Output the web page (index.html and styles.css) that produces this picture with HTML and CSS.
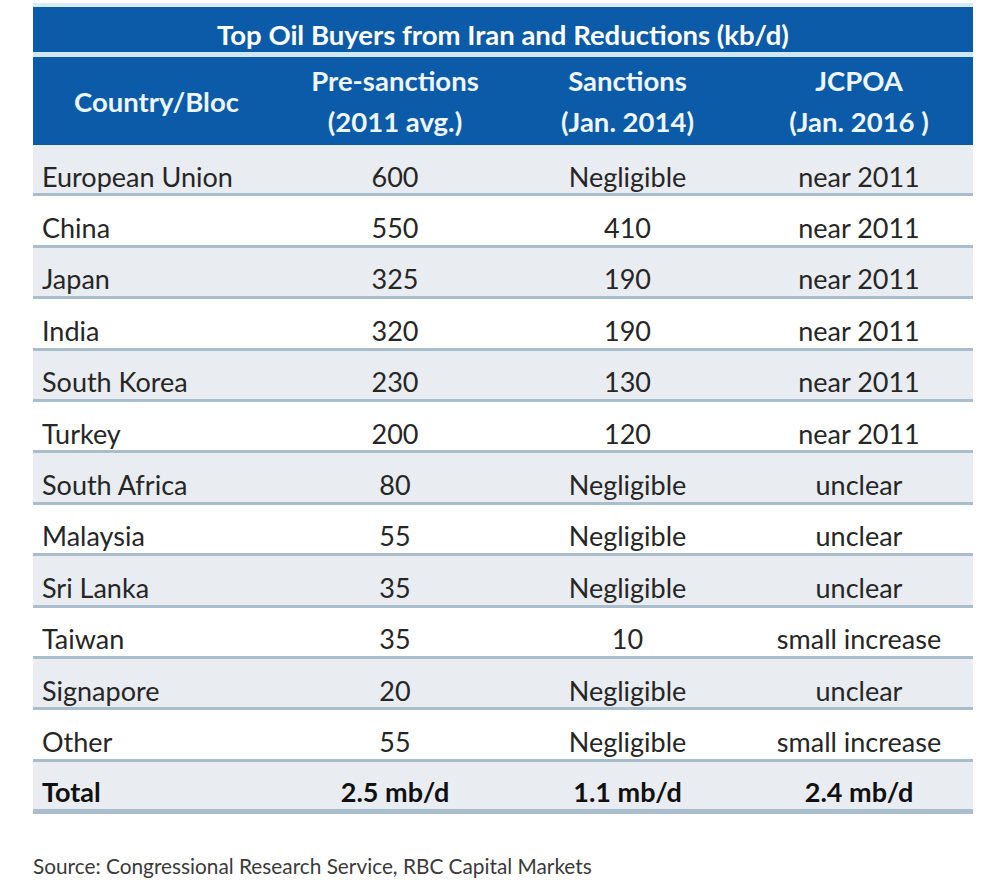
FILE: index.html
```html
<!DOCTYPE html>
<html>
<head>
<meta charset="utf-8">
<link rel="stylesheet" href="styles.css">
</head>
<body>
<div class="page">
  <table class="oil">
    <colgroup>
      <col class="c1"><col class="c2"><col class="c3"><col class="c4">
    </colgroup>
    <thead>
      <tr class="title-row"><th colspan="4">Top Oil Buyers from Iran and Reductions (kb/d)</th></tr>
      <tr class="head-row">
        <th>Country/Bloc</th>
        <th>Pre-sanctions<br>(2011 avg.)</th>
        <th>Sanctions<br>(Jan. 2014)</th>
        <th>JCPOA<br>(Jan. 2016 )</th>
      </tr>
    </thead>
    <tbody>
      <tr class="alt"><td>European Union</td><td>600</td><td>Negligible</td><td>near 2011</td></tr>
      <tr><td>China</td><td>550</td><td>410</td><td>near 2011</td></tr>
      <tr class="alt"><td>Japan</td><td>325</td><td>190</td><td>near 2011</td></tr>
      <tr><td>India</td><td>320</td><td>190</td><td>near 2011</td></tr>
      <tr class="alt"><td>South Korea</td><td>230</td><td>130</td><td>near 2011</td></tr>
      <tr><td>Turkey</td><td>200</td><td>120</td><td>near 2011</td></tr>
      <tr class="alt"><td>South Africa</td><td>80</td><td>Negligible</td><td>unclear</td></tr>
      <tr><td>Malaysia</td><td>55</td><td>Negligible</td><td>unclear</td></tr>
      <tr class="alt"><td>Sri Lanka</td><td>35</td><td>Negligible</td><td>unclear</td></tr>
      <tr><td>Taiwan</td><td>35</td><td>10</td><td>small increase</td></tr>
      <tr class="alt"><td>Signapore</td><td>20</td><td>Negligible</td><td>unclear</td></tr>
      <tr><td>Other</td><td>55</td><td>Negligible</td><td>small increase</td></tr>
      <tr class="alt total"><td>Total</td><td>2.5 mb/d</td><td>1.1 mb/d</td><td>2.4 mb/d</td></tr>
    </tbody>
  </table>
  <p class="source">Source: Congressional Research Service, RBC Capital Markets</p>
</div>
</body>
</html>
```
FILE: styles.css
```css
html, body {
  margin: 0;
  padding: 0;
  background: #ffffff;
}
body {
  font-family: "Lato", "Open Sans", sans-serif;
  color: #222222;
}
.page {
  padding: 3px 0 0 33px;
  width: 940px;
}
.oil {
  width: 940px;
  border-collapse: collapse;
  table-layout: fixed;
}
.c1 { width: 247px; }
.c2 { width: 230px; }
.c3 { width: 235px; }
.c4 { width: 228px; }

.title-row th {
  background: #0b5ba8;
  color: #ffffff;
  font-weight: 700;
  font-size: 27.5px;
  line-height: 33px;
  height: 35px;
  padding: 10px 0 0 0;
  border-top: 4px solid #d4ecf9;
  border-bottom: 5px solid #cde9f8;
  text-align: center;
  vertical-align: middle;
}
.head-row th {
  background: #0b5ba8;
  color: #eef6ff;
  font-weight: 700;
  font-size: 27.5px;
  line-height: 41px;
  height: 88px;
  padding: 0;
  text-align: center;
  vertical-align: middle;
}
tbody td {
  height: 33.4px;
  padding: 15px 0 0 0;
  font-size: 27px;
  line-height: 32px;
  text-align: center;
  vertical-align: middle;
  border-bottom: 3px solid #aabdcd;
  color: #262626;
  background: #ffffff;
}
tbody td:first-child {
  text-align: left;
  padding-left: 9px;
}
tbody tr.alt td {
  background: #e9ecf0;
}
tbody tr.total td {
  font-weight: 700;
  color: #111111;
  height: 34px;
  padding-top: 13px;
  border-bottom: 5px solid #aabdcd;
}
.source {
  margin: 39px 0 0 0;
  font-size: 20.8px;
  color: #3a3a3a;
}
```
